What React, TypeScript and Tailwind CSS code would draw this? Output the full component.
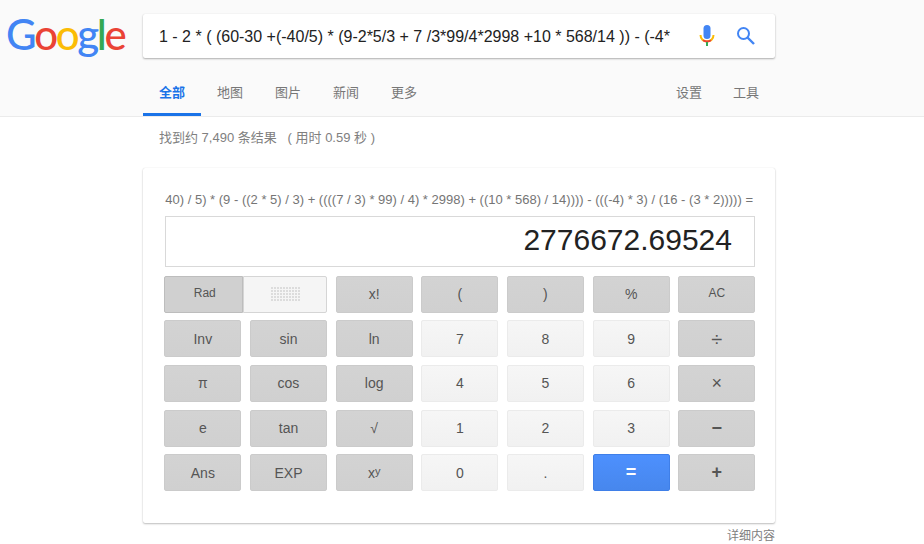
const FONT = { fontFamily: '"Liberation Sans", "Noto Sans CJK SC", sans-serif' };

type Key = {
  label: React.ReactNode;
  kind?: 'dark' | 'light' | 'blue';
  size?: string;
};

const keys: Key[] = [
  { label: 'x!' },
  { label: '(' },
  { label: ')' },
  { label: '%' },
  { label: 'AC', size: 'text-xs pb-0.5' },
  { label: 'Inv' },
  { label: 'sin' },
  { label: 'ln' },
  { label: '7', kind: 'light' },
  { label: '8', kind: 'light' },
  { label: '9', kind: 'light' },
  { label: '÷', size: 'text-[20px]' },
  { label: 'π' },
  { label: 'cos' },
  { label: 'log' },
  { label: '4', kind: 'light' },
  { label: '5', kind: 'light' },
  { label: '6', kind: 'light' },
  { label: '×', size: 'text-[18px]' },
  { label: 'e' },
  { label: 'tan' },
  { label: '√' },
  { label: '1', kind: 'light' },
  { label: '2', kind: 'light' },
  { label: '3', kind: 'light' },
  { label: '−', size: 'text-[18px] font-bold' },
  { label: 'Ans' },
  { label: 'EXP' },
  {
    label: (
      <span className="flex items-start leading-4">
        x<span className="text-[11px] leading-[13px]">y</span>
      </span>
    ),
  },
  { label: '0', kind: 'light' },
  { label: '.', kind: 'light' },
  { label: '=', kind: 'blue', size: 'text-[18px] font-bold' },
  { label: '+', size: 'text-[18px] font-bold' },
];

const CalcKey = ({ label, kind = 'dark', size = 'text-sm' }: Key) => {
  const color =
    kind === 'dark'
      ? 'border-[#cbcbcb] bg-gradient-to-b from-[#d3d3d3] to-[#d0d0d0] text-[#555]'
      : kind === 'light'
        ? 'border-[#ebebeb] bg-gradient-to-b from-[#f6f6f6] to-[#f1f1f1] text-[#555]'
        : 'border-[#3f7fe8] bg-gradient-to-b from-[#4d90fe] to-[#4787ed] text-white';
  return (
    <div
      className={`flex h-[37px] items-center justify-center rounded-[2px] border ${color} ${size}`}
    >
      {label}
    </div>
  );
};

const MicIcon = () => (
  <svg width="16" height="24" viewBox="0 0 16 24">
    <rect x="4.500" y="1" width="7" height="14" rx="3.500" fill="#4285f4" />
    <path d="M1.500 11c0 4 3 6.500 6.500 6.500s6.500-2.500 6.500-6.500" fill="none" stroke="#fbbc05" strokeWidth="2" />
    <path d="M4 16.200c1.100.8 2.500 1.300 4 1.300s2.900-.5 4-1.300" fill="none" stroke="#ea4335" strokeWidth="2" />
    <rect x="7" y="18" width="2" height="4" fill="#34a853" />
  </svg>
);

const SearchIcon = () => (
  <svg width="20" height="20" viewBox="0 0 20 20" fill="none" stroke="#4285f4">
    <circle cx="7.500" cy="7.500" r="5.500" strokeWidth="2" />
    <path d="M11.500 11.500 18 18" strokeWidth="2.400" />
  </svg>
);

const Logo = () => (
  <div
    className="flex h-[44px] w-[143px] items-center pb-[5px] pl-[6px] text-[42px] font-medium leading-none tracking-[-2.400px]"
    style={{ fontFamily: 'Lato, sans-serif' }}
  >
    <span className="text-[#4285f4]">G</span>
    <span className="text-[#ea4335]">o</span>
    <span className="text-[#fbbc05]">o</span>
    <span className="text-[#4285f4]">g</span>
    <span className="text-[#34a853]">l</span>
    <span className="text-[#ea4335]">e</span>
  </div>
);

const App = () => {
  return (
    <div className="h-[544px] w-[924px] overflow-hidden bg-white" style={FONT}>
      <div className="h-[117px] border-b border-[#ebebeb] bg-[#fafafa] pt-[14px]">
        <div className="flex">
          <Logo />
          <div className="flex h-[44px] w-[632px] items-center rounded-[2px] bg-white pl-4 pr-[19px] shadow-[0_1px_2px_rgba(0,0,0,0.3),0_0_1px_rgba(0,0,0,0.1)]">
            <div className="flex-1 overflow-hidden whitespace-nowrap pt-0.5 text-base text-[#222]">
              1 - 2 * ( (60-30 +(-40/5) * (9-2*5/3 + 7 /3*99/4*2998 +10 * 568/14 )) - (-4*
            </div>
            <div className="ml-7 flex items-center gap-[21px]">
              <MicIcon />
              <SearchIcon />
            </div>
          </div>
        </div>
        <div className="ml-[143px] mt-[14px] flex h-[44px] w-[632px] justify-between text-[13px] text-[#777]">
          <div className="flex">
            <div className="flex w-[58px] items-center justify-center border-b-[3px] border-[#1a73e8] font-bold text-[#1a73e8]">
              全部
            </div>
            <div className="flex w-[58px] items-center justify-center pb-[3px]">地图</div>
            <div className="flex w-[58px] items-center justify-center pb-[3px]">图片</div>
            <div className="flex w-[58px] items-center justify-center pb-[3px]">新闻</div>
            <div className="flex w-[58px] items-center justify-center pb-[3px]">更多</div>
          </div>
          <div className="flex items-center gap-[31px] pb-[3px] pr-4">
            <span>设置</span>
            <span>工具</span>
          </div>
        </div>
      </div>

      <div className="ml-[159px] mt-[13px] text-[13px] leading-4 text-[#808080]">
        找到约 7,490 条结果&nbsp;&nbsp; ( 用时 0.59 秒 )
      </div>

      <div className="ml-[143px] mt-[22px] h-[355px] w-[632px] rounded-[2px] bg-white px-[21px] pt-[24px] shadow-[0_1px_2px_rgba(0,0,0,0.25),0_0_1px_rgba(0,0,0,0.15)]">
        <div className="mr-px whitespace-nowrap text-right text-[13px] leading-4 text-[#757575]">
          40) / 5) * (9 - ((2 * 5) / 3) + ((((7 / 3) * 99) / 4) * 2998) + ((10 * 568) / 14)))) - (((-4) * 3) / (16 - (3 * 2))))) =
        </div>
        <div className="-mr-px ml-px mt-2 flex h-[51px] items-center justify-end border border-[#d9d9d9] pb-[5px] pr-[22px] text-[30px] text-[#222]">
          2776672.69524
        </div>
        <div className="-mr-[1.300px] ml-[0.300px] mt-[8.800px] grid grid-cols-7 gap-x-[8.600px] gap-y-[7.600px]">
          <div className="col-span-2 flex h-[37px]">
            <div className="flex w-[79px] items-center justify-center rounded-l-[2px] border border-[#bdbdbd] bg-[#d0d0d0] pb-0.5 pl-0.5 text-xs text-[#555]">
              Rad
            </div>
            <div className="flex flex-1 items-center justify-center rounded-r-[2px] border border-[#d5d5d5] bg-[#f5f5f5]">
              <div className="grid grid-cols-10 gap-px">
                {Array.from({ length: 50 }, (_, i) => (
                  <span key={i} className="h-[2px] w-[2px] bg-[#dcdcdc]" />
                ))}
              </div>
            </div>
          </div>
          {keys.map((key, i) => (
            <CalcKey key={i} {...key} />
          ))}
        </div>
      </div>

      <div className="ml-[143px] mt-[5px] w-[632px] text-right text-xs text-[#808080]">详细内容</div>
    </div>
  );
};

export default App;
